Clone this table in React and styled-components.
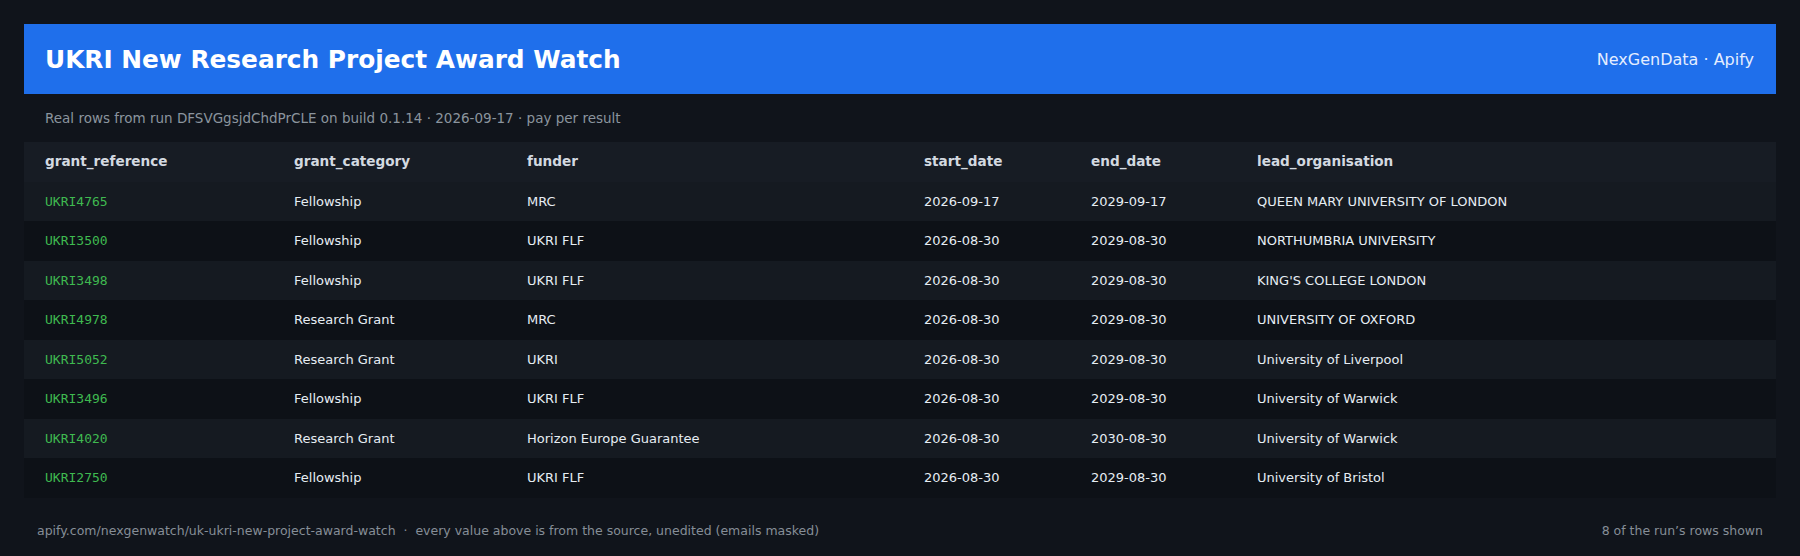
import React from 'react';
import styled, { createGlobalStyle } from 'styled-components';

const GlobalStyle = createGlobalStyle`
  html, body {
    margin: 0;
    padding: 0;
    background: #10141b;
  }
  body {
    font-family: "DejaVu Sans", "Liberation Sans", sans-serif;
    color: #e6edf3;
  }
`;

const Page = styled.div`
  display: flex;
  flex-direction: column;
  padding: 24px 24px 0;
  min-height: 556px;
  box-sizing: border-box;
`;

const Banner = styled.header`
  display: flex;
  align-items: center;
  justify-content: space-between;
  height: 70px;
  padding: 0 22px 0 21px;
  background: #1f6feb;
`;

const Title = styled.h1`
  margin: 0;
  font-size: 24.8px;
  font-weight: bold;
  color: #ffffff;
`;

const Brand = styled.span`
  font-size: 16px;
  color: #e4edff;
`;

const RunLine = styled.p`
  margin: 0;
  padding: 14px 21px;
  font-size: 13.5px;
  line-height: 20px;
  color: #8b949e;
`;

const Table = styled.table`
  width: 100%;
  border-collapse: collapse;
  table-layout: fixed;
`;

const Col = styled.col`
  width: ${p => p.w}px;
`;

const HeadRow = styled.tr`
  background: #171c24;
`;

const Row = styled.tr`
  background: ${p => (p.odd ? '#151a21' : '#0d1117')};
`;

const HeadCell = styled.th`
  text-align: left;
  padding: 12px 21px;
  font-size: 13.6px;
  line-height: 15.5px;
  font-weight: bold;
  color: #d3d9e0;
`;

const Cell = styled.td`
  padding: 12px 21px;
  font-size: 13px;
  line-height: 15.5px;
  white-space: nowrap;
  color: #e6edf3;
`;

const RefCell = styled(Cell)`
  font-family: "DejaVu Sans Mono", "Liberation Mono", monospace;
  color: #3fb950;
`;

const Footer = styled.footer`
  display: flex;
  justify-content: space-between;
  padding: 25px 13px 19px;
  font-size: 12.5px;
  line-height: 16px;
  color: #868e97;
`;

const widths = [249, 233, 397, 167, 166, 540];
const columns = ['grant_reference', 'grant_category', 'funder', 'start_date', 'end_date', 'lead_organisation'];

const rows = [
  ['UKRI4765', 'Fellowship', 'MRC', '2026-09-17', '2029-09-17', 'QUEEN MARY UNIVERSITY OF LONDON'],
  ['UKRI3500', 'Fellowship', 'UKRI FLF', '2026-08-30', '2029-08-30', 'NORTHUMBRIA UNIVERSITY'],
  ['UKRI3498', 'Fellowship', 'UKRI FLF', '2026-08-30', '2029-08-30', "KING'S COLLEGE LONDON"],
  ['UKRI4978', 'Research Grant', 'MRC', '2026-08-30', '2029-08-30', 'UNIVERSITY OF OXFORD'],
  ['UKRI5052', 'Research Grant', 'UKRI', '2026-08-30', '2029-08-30', 'University of Liverpool'],
  ['UKRI3496', 'Fellowship', 'UKRI FLF', '2026-08-30', '2029-08-30', 'University of Warwick'],
  ['UKRI4020', 'Research Grant', 'Horizon Europe Guarantee', '2026-08-30', '2030-08-30', 'University of Warwick'],
  ['UKRI2750', 'Fellowship', 'UKRI FLF', '2026-08-30', '2029-08-30', 'University of Bristol'],
];

export default function App() {
  return (
    <>
      <GlobalStyle />
      <Page>
        <Banner>
          <Title>UKRI New Research Project Award Watch</Title>
          <Brand>NexGenData · Apify</Brand>
        </Banner>
        <RunLine>Real rows from run DFSVGgsjdChdPrCLE on build 0.1.14 · 2026-09-17 · pay per result</RunLine>
        <Table>
          <colgroup>
            {widths.map((w, i) => <Col key={i} w={w} />)}
          </colgroup>
          <thead>
            <HeadRow>
              {columns.map(c => <HeadCell key={c}>{c}</HeadCell>)}
            </HeadRow>
          </thead>
          <tbody>
            {rows.map((r, idx) => (
              <Row key={r[0]} odd={idx % 2 === 0}>
                <RefCell>{r[0]}</RefCell>
                {r.slice(1).map((v, i) => <Cell key={i}>{v}</Cell>)}
              </Row>
            ))}
          </tbody>
        </Table>
        <Footer>
          <span>apify.com/nexgenwatch/uk-ukri-new-project-award-watch&nbsp; · &nbsp;every value above is from the source, unedited (emails masked)</span>
          <span>8 of the run’s rows shown</span>
        </Footer>
      </Page>
    </>
  );
}
